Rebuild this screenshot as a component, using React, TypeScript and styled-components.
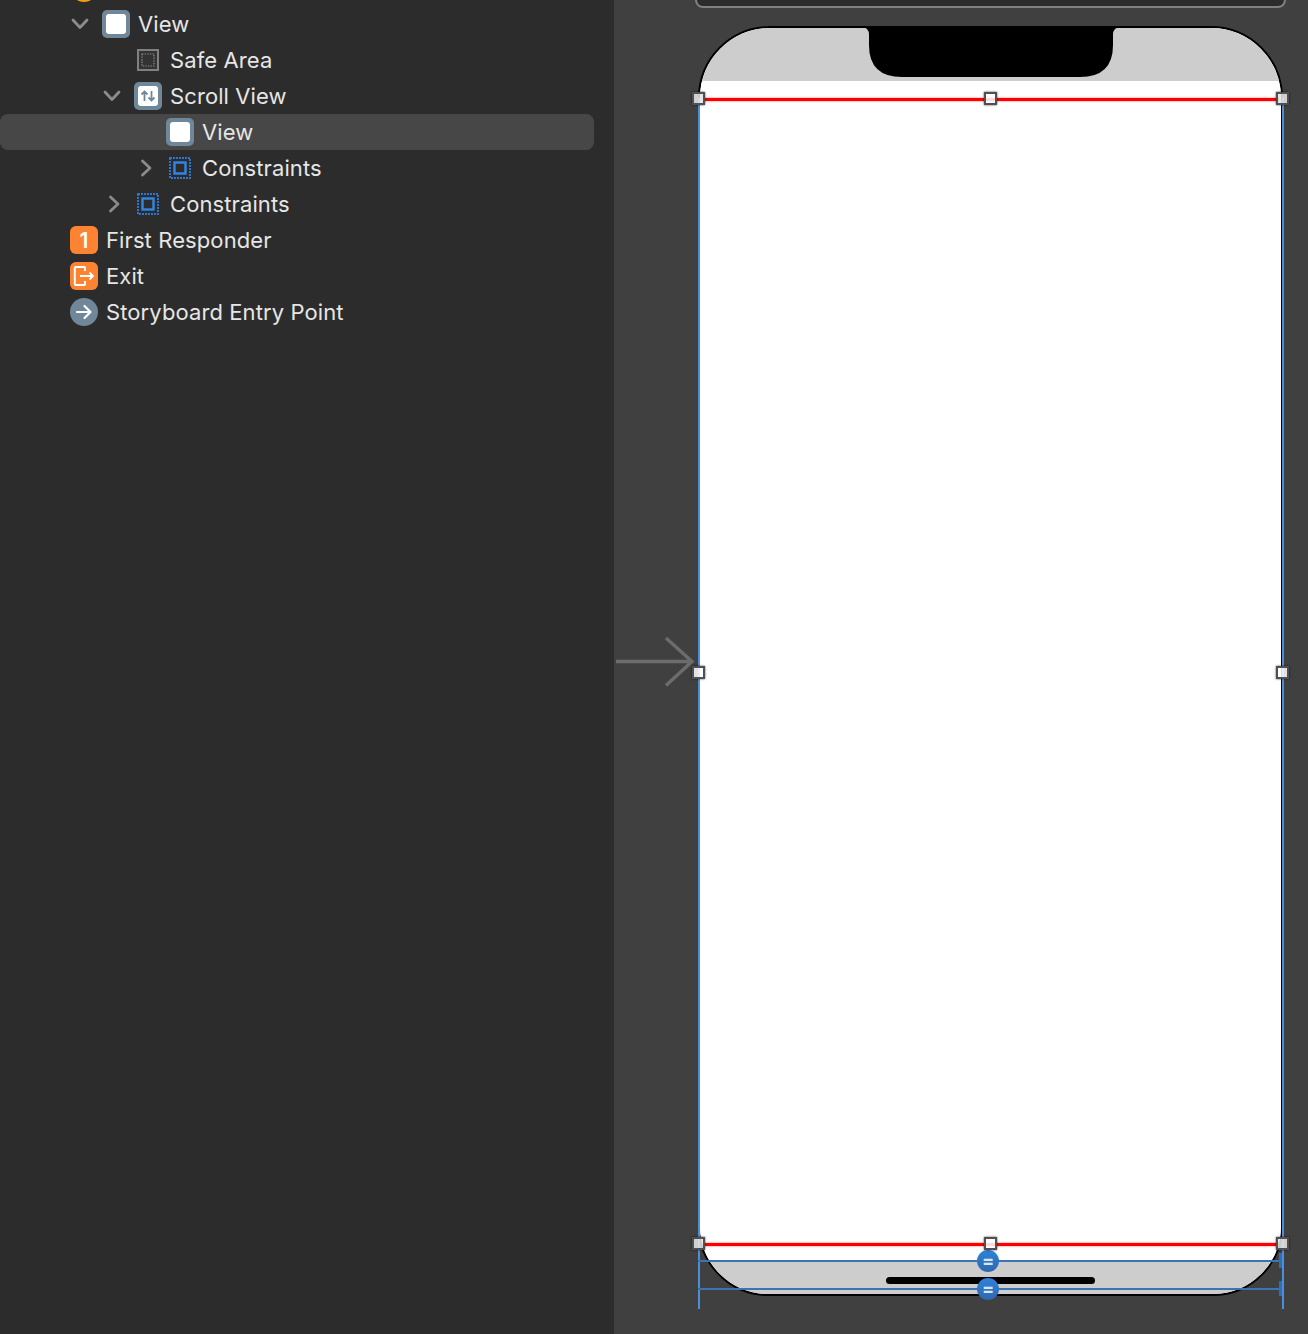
import React from "react";
import styled, { createGlobalStyle } from "styled-components";

const GlobalStyle = createGlobalStyle`
  html, body {
    margin: 0;
    padding: 0;
    width: 1308px;
    height: 1334px;
    overflow: hidden;
    background: #404040;
  }
`;

const Page = styled.div`
  display: flex;
  width: 1308px;
  height: 1334px;
  overflow: hidden;
  font-family: Inter, "Liberation Sans", sans-serif;
`;

const Sidebar = styled.div`
  width: 614px;
  flex: none;
  background: #2c2c2c;
  overflow: hidden;
`;

const Tree = styled.div`
  display: flex;
  flex-direction: column;
  width: 594px;
  margin-top: -30px;
`;

const Row = styled.div<{ $depth: number; $selected?: boolean }>`
  display: flex;
  align-items: center;
  height: 36px;
  padding-left: ${({ $depth }) => 32 + $depth * 32}px;
  border-radius: 8px;
  background: ${({ $selected }) => ($selected ? "#474747" : "transparent")};
`;

const ChevronSlot = styled.div`
  display: flex;
  align-items: center;
  justify-content: center;
  width: 32px;
  height: 28px;
  margin-right: 6px;
  flex: none;
`;

const IconSlot = styled.div`
  display: flex;
  align-items: center;
  justify-content: center;
  width: 28px;
  height: 28px;
  margin-right: 8px;
  flex: none;
`;

const Label = styled.span`
  font-size: 22px;
  line-height: 28px;
  color: #e6e6e6;
  white-space: nowrap;
  letter-spacing: 0.1px;
`;

const SlateTile = styled.div`
  display: flex;
  align-items: center;
  justify-content: center;
  width: 28px;
  height: 28px;
  border-radius: 5px;
  background: #6f8798;
`;

const WhiteInner = styled.div`
  display: flex;
  align-items: center;
  justify-content: center;
  width: 20px;
  height: 20px;
  border-radius: 3px;
  background: #fff;
`;

const OrangeTile = styled.div`
  display: flex;
  align-items: center;
  justify-content: center;
  width: 28px;
  height: 28px;
  border-radius: 6px;
  background: #fb8332;
  color: #fff;
  font-size: 21px;
  font-weight: 600;
`;

const SlateCircle = styled(SlateTile)`
  border-radius: 50%;
`;

const AmberCircle = styled(SlateCircle)`
  background: #f5a00f;
`;

const Canvas = styled.div`
  position: relative;
  flex: 1;
  display: flex;
  flex-direction: column;
  background: #404040;
`;

const SceneBar = styled.div`
  box-sizing: border-box;
  height: 9px;
  margin: -1px 22px 0 81px;
  background: #2c2c2c;
  border: 2px solid #808080;
  border-top: none;
  border-radius: 0 0 8px 8px;
`;

const EntryArrow = styled.svg`
  position: absolute;
  left: 0;
  top: 630px;
`;

const PhoneFrame = styled.div`
  position: relative;
  width: 585px;
  height: 1270px;
  margin: 18px 0 0 84px;
`;

const PhoneShell = styled.div`
  box-sizing: border-box;
  display: flex;
  flex-direction: column;
  width: 100%;
  height: 100%;
  border: 2px solid #000;
  border-radius: 72px 72px 70px 70px;
  overflow: hidden;
  background: #fff;
`;

const StatusStrip = styled.div`
  height: 53px;
  flex: none;
  background: #cdcdcd;
`;

const ContentArea = styled.div`
  flex: 1;
  background: #fff;
`;

const HomeStrip = styled.div`
  display: flex;
  justify-content: center;
  height: 34px;
  flex: none;
  background: #cdcdcd;
`;

const HomeIndicator = styled.div`
  width: 209px;
  height: 7px;
  margin-top: 17px;
  border-radius: 4px;
  background: #000;
`;

const Notch = styled.svg`
  position: absolute;
  left: 160px;
  top: 0;
`;

const RedLine = styled.div<{ $top: number }>`
  position: absolute;
  left: 6px;
  right: 4px;
  top: ${({ $top }) => $top}px;
  height: 3.5px;
  background: #fe0000;
  box-shadow: 0 0 2px rgba(255, 0, 0, 0.7);
`;

const SelectionEdge = styled.div<{ $left: number }>`
  position: absolute;
  left: ${({ $left }) => $left}px;
  top: 72px;
  bottom: -13px;
  width: 2.5px;
  background: #4a8fd8;
`;

const ConstraintLine = styled.div<{ $top: number }>`
  position: absolute;
  left: 0;
  width: 584px;
  top: ${({ $top }) => $top}px;
  height: 2px;
  background: #3a74b4;
`;

const ConstraintTick = styled.div<{ $top: number }>`
  position: absolute;
  left: 581px;
  top: ${({ $top }) => $top}px;
  width: 3px;
  height: 15px;
  background: #2f6fb5;
`;

const Badge = styled.div<{ $top: number }>`
  position: absolute;
  left: 279px;
  top: ${({ $top }) => $top}px;
  display: flex;
  align-items: center;
  justify-content: center;
  width: 22px;
  height: 22px;
  border-radius: 50%;
  background: linear-gradient(#2f82dc, #2c69ac);
  color: #d6e4f3;
  font-size: 18px;
  line-height: 22px;
  font-weight: 700;
`;

const Handle = styled.div<{ $x: number; $y: number; $corner?: boolean }>`
  box-sizing: border-box;
  position: absolute;
  left: ${({ $x }) => $x - 6.5}px;
  top: ${({ $y }) => $y - 6.5}px;
  width: 13px;
  height: 13px;
  border: 2px solid #505050;
  background: ${({ $corner }) =>
    $corner ? "rgba(228, 228, 228, 0.88)" : "rgba(255, 255, 255, 0.85)"};
  box-shadow: 0 0 2px rgba(0, 0, 0, 0.7);
`;

const Chevron = ({ open }: { open?: boolean }) =>
  open ? (
    <svg width="18" height="12" viewBox="0 0 18 12">
      <path d="M2 2 L9 9.5 L16 2" fill="none" stroke="#8b8b8b" strokeWidth="2.8" strokeLinecap="round" strokeLinejoin="round" />
    </svg>
  ) : (
    <svg width="12" height="18" viewBox="0 0 12 18" style={{ transform: "translateX(2px)" }}>
      <path d="M2.5 2 L10 9 L2.5 16" fill="none" stroke="#8b8b8b" strokeWidth="2.8" strokeLinecap="round" strokeLinejoin="round" />
    </svg>
  );

const ViewIcon = () => (
  <SlateTile>
    <WhiteInner />
  </SlateTile>
);

const ScrollIcon = () => (
  <SlateTile>
    <WhiteInner>
      <svg width="16" height="12" viewBox="0 0 16 12">
        <path d="M4.5 11 V1.5 M1.5 4.5 L4.5 1.5 L7.5 4.5 M11.5 1 V10.5 M8.5 7.5 L11.5 10.5 L14.5 7.5" fill="none" stroke="#6f8798" strokeWidth="1.8" />
      </svg>
    </WhiteInner>
  </SlateTile>
);

const SafeAreaIcon = () => (
  <svg width="22" height="22" viewBox="0 0 22 22">
    <rect x="1" y="1" width="20" height="20" fill="#333" stroke="#808080" strokeWidth="2" />
    <rect x="5" y="5" width="12" height="12" fill="none" stroke="#8c8c8c" strokeWidth="1.2" strokeDasharray="1.4 1.2" />
  </svg>
);

const ConstraintsIcon = () => (
  <svg width="22" height="22" viewBox="0 0 22 22">
    <rect x="1" y="1" width="20" height="20" fill="none" stroke="#2f74c8" strokeWidth="2" strokeDasharray="2 1" />
    <rect x="5.5" y="5.5" width="11" height="11" fill="none" stroke="#2f86e8" strokeWidth="2.4" />
  </svg>
);

const ExitIcon = () => (
  <OrangeTile>
    <svg width="24" height="22" viewBox="0 0 24 22">
      <path d="M13 6 V3 Q13 2 12 2 H4 Q2.8 2 2.8 3.2 V18.8 Q2.8 20 4 20 H12 Q13 20 13 19 V16" fill="none" stroke="#fff" strokeWidth="2" />
      <path d="M8 11 H21 M17.5 7.5 L21 11 L17.5 14.5" fill="none" stroke="#fff" strokeWidth="1.8" />
    </svg>
  </OrangeTile>
);

const EntryIcon = () => (
  <SlateCircle>
    <svg width="18" height="16" viewBox="0 0 18 16">
      <path d="M2 8 H15.5 M9.5 2 L15.5 8 L9.5 14" fill="none" stroke="#fff" strokeWidth="2.2" strokeLinecap="round" strokeLinejoin="round" />
    </svg>
  </SlateCircle>
);

const rows = [
  { depth: 0, label: "", icon: <AmberCircle /> },
  { depth: 1, label: "View", chevron: "open", icon: <ViewIcon /> },
  { depth: 2, label: "Safe Area", icon: <SafeAreaIcon /> },
  { depth: 2, label: "Scroll View", chevron: "open", icon: <ScrollIcon /> },
  { depth: 3, label: "View", selected: true, icon: <ViewIcon /> },
  { depth: 3, label: "Constraints", chevron: "closed", icon: <ConstraintsIcon /> },
  { depth: 2, label: "Constraints", chevron: "closed", icon: <ConstraintsIcon /> },
  { depth: 0, label: "First Responder", icon: <OrangeTile>1</OrangeTile> },
  { depth: 0, label: "Exit", icon: <ExitIcon /> },
  { depth: 0, label: "Storyboard Entry Point", icon: <EntryIcon /> },
];

const handles = [
  { x: 0.5, y: 72.5, corner: true },
  { x: 292.5, y: 72.5 },
  { x: 584.5, y: 72.5, corner: true },
  { x: 0.5, y: 646 },
  { x: 584.5, y: 646 },
  { x: 0.5, y: 1217, corner: true },
  { x: 292.5, y: 1217 },
  { x: 584.5, y: 1217, corner: true },
];

export default function App() {
  return (
    <Page>
      <GlobalStyle />
      <Sidebar>
        <Tree>
          {rows.map((row, index) => (
            <Row key={index} $depth={row.depth} $selected={row.selected}>
              <ChevronSlot>
                {row.chevron && <Chevron open={row.chevron === "open"} />}
              </ChevronSlot>
              <IconSlot>{row.icon}</IconSlot>
              <Label>{row.label}</Label>
            </Row>
          ))}
        </Tree>
      </Sidebar>
      <Canvas>
        <SceneBar />
        <EntryArrow width="82" height="64" viewBox="0 0 82 64">
          <path d="M2 31.5 H77 M52 8 L78 31.5 L52 55.5" fill="none" stroke="#6c6c6c" strokeWidth="3.4" />
        </EntryArrow>
        <PhoneFrame>
          <PhoneShell>
            <StatusStrip />
            <ContentArea />
            <HomeStrip>
              <HomeIndicator />
            </HomeStrip>
          </PhoneShell>
          <Notch width="264" height="52" viewBox="0 0 264 52">
            <path
              d="M0 0 H264 V1 H263 Q255 1 255 9 V19 Q255 51 222 51 H44 Q11 51 11 19 V9 Q11 1 3 1 H0 Z"
              fill="#000"
            />
          </Notch>
          <RedLine $top={71.75} />
          <RedLine $top={1216.75} />
          <SelectionEdge $left={-0.5} />
          <SelectionEdge $left={583.5} />
          <ConstraintLine $top={1233.5} />
          <ConstraintLine $top={1261.5} />
          <ConstraintTick $top={1227} />
          <ConstraintTick $top={1255} />
          <Badge $top={1224}>=</Badge>
          <Badge $top={1252}>=</Badge>
          {handles.map((h, index) => (
            <Handle key={index} $x={h.x} $y={h.y} $corner={h.corner} />
          ))}
        </PhoneFrame>
      </Canvas>
    </Page>
  );
}
